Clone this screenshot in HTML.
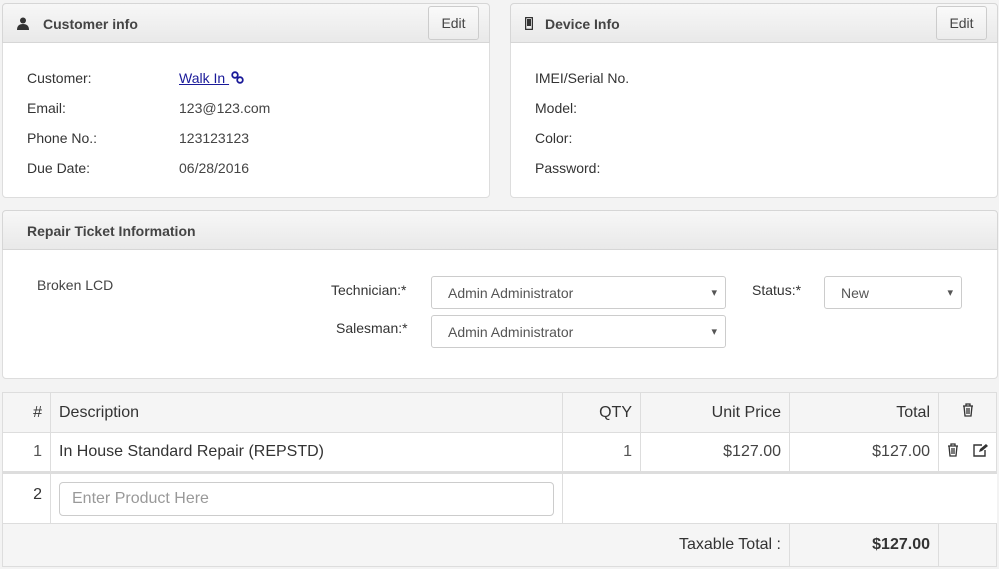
<!DOCTYPE html>
<html><head><meta charset="utf-8"><style>
*{box-sizing:border-box;margin:0;padding:0}
body{width:999px;height:569px;background:#f3f3f3;font-family:"Liberation Sans",sans-serif;font-size:14px;color:#333;position:relative;overflow:hidden}
.abs{position:absolute}
.panel{position:absolute;background:#fff;border:1px solid #ddd;border-radius:4px}
.hdr{position:absolute;background:linear-gradient(#f7f7f7,#e9e9e9);border:1px solid #d6d6d6;border-radius:4px 4px 0 0;font-weight:bold;color:#444;font-size:14px}
.btn{position:absolute;background:linear-gradient(#fafafa,#ececec);border:1px solid #ccc;border-radius:3px;font-size:14px;color:#444;text-align:center;line-height:32px}
.lbl{position:absolute;font-size:14px;color:#333}
.sel{position:absolute;background:#fff;border:1px solid #ccc;border-radius:3px;font-size:14px;color:#555;padding-left:16px;line-height:32px}
.sel:after{content:"▾";position:absolute;right:8px;top:0;font-size:11px;color:#555}
table{position:absolute;left:2px;top:392px;width:995px;border-collapse:collapse;font-size:16px}
td{border:1px solid #ddd;padding:0 8px}
</style></head><body>

<div class="panel" style="left:2px;top:38px;width:488px;height:160px"></div>
<div class="hdr" style="left:2px;top:3px;width:488px;height:40px">
<svg class="abs" style="left:14px;top:13px" width="12" height="13" viewBox="0 0 12 13"><circle cx="6" cy="3.5" r="3" fill="#333"/><path d="M0 13 Q0 7 6 7 Q12 7 12 13Z" fill="#333"/></svg>
<span class="abs" style="left:40px;top:12px">Customer info</span></div>
<div class="btn" style="left:428px;top:6px;width:51px;height:34px">Edit</div>
<div class="lbl" style="left:27px;top:70px">Customer:</div>
<div class="lbl" style="left:179px;top:70px;color:#1a1a99;text-decoration:underline">Walk In&nbsp;</div>
<svg class="abs" style="left:231px;top:71px" width="13" height="13" viewBox="0 0 13 13"><circle cx="4" cy="4" r="2.8" fill="none" stroke="#1a1a99" stroke-width="1.8"/><circle cx="9" cy="9" r="2.8" fill="none" stroke="#1a1a99" stroke-width="1.8"/></svg>
<div class="lbl" style="left:27px;top:100px">Email:</div>
<div class="lbl" style="left:179px;top:100px;color:#444">123@123.com</div>
<div class="lbl" style="left:27px;top:130px">Phone No.:</div>
<div class="lbl" style="left:179px;top:130px;color:#444">123123123</div>
<div class="lbl" style="left:27px;top:160px">Due Date:</div>
<div class="lbl" style="left:179px;top:160px;color:#444">06/28/2016</div>

<div class="panel" style="left:510px;top:38px;width:488px;height:160px"></div>
<div class="hdr" style="left:510px;top:3px;width:488px;height:40px">
<svg class="abs" style="left:14px;top:13px" width="8" height="13" viewBox="0 0 8 13"><rect x="0.5" y="0.5" width="7" height="12" rx="1" fill="none" stroke="#333" stroke-width="1.5"/><rect x="2" y="2" width="4" height="7" fill="#333"/></svg>
<span class="abs" style="left:34px;top:12px">Device Info</span></div>
<div class="btn" style="left:936px;top:6px;width:51px;height:34px">Edit</div>
<div class="lbl" style="left:535px;top:70px">IMEI/Serial No.</div>
<div class="lbl" style="left:535px;top:100px">Model:</div>
<div class="lbl" style="left:535px;top:130px">Color:</div>
<div class="lbl" style="left:535px;top:160px">Password:</div>

<div class="panel" style="left:2px;top:245px;width:996px;height:134px"></div>
<div class="hdr" style="left:2px;top:210px;width:996px;height:40px"><span class="abs" style="left:24px;top:12px">Repair Ticket Information</span></div>
<div class="lbl" style="left:37px;top:277px;color:#444">Broken LCD</div>
<div class="lbl" style="left:331px;top:282px">Technician:*</div>
<div class="sel" style="left:431px;top:276px;width:295px;height:33px">Admin Administrator</div>
<div class="lbl" style="left:752px;top:282px">Status:*</div>
<div class="sel" style="left:824px;top:276px;width:138px;height:33px">New</div>
<div class="lbl" style="left:336px;top:320px">Salesman:*</div>
<div class="sel" style="left:431px;top:315px;width:295px;height:33px">Admin Administrator</div>

<table>
<tr style="height:40px;background:#f5f5f5">
<td style="width:48px;text-align:right">#</td><td style="width:512px">Description</td><td style="width:78px;text-align:right">QTY</td><td style="width:149px;text-align:right">Unit Price</td><td style="width:149px;text-align:right">Total</td><td style="text-align:center"><svg width="12" height="14" viewBox="0 0 12 14"><path d="M1 3h10M4 3V1h4v2M2 3l1 10h6l1-10M5 5v6M7 5v6" fill="none" stroke="#333" stroke-width="1.3"/></svg></td></tr>
<tr style="height:40px;background:#fff;border-bottom:3px solid #ddd">
<td style="text-align:right;color:#555">1</td><td>In House Standard Repair (REPSTD)</td><td style="text-align:right;color:#555">1</td><td style="text-align:right;color:#444">$127.00</td><td style="text-align:right;color:#444">$127.00</td>
<td style="text-align:center"><svg width="12" height="14" viewBox="0 0 12 14"><path d="M1 3h10M4 3V1h4v2M2 3l1 10h6l1-10M5 5v6M7 5v6" fill="none" stroke="#333" stroke-width="1.3"/></svg>&nbsp;&nbsp;&nbsp;<svg width="15" height="14" viewBox="0 0 15 14"><path d="M9 2H1v11h11V7" fill="none" stroke="#333" stroke-width="1.4"/><path d="M6 9l1-3 6-5 2 2-6 5z" fill="#333"/></svg></td></tr>
<tr style="height:51px;background:#fff">
<td style="text-align:right;vertical-align:top;padding-top:12px;color:#333">2</td>
<td><div style="border:1px solid #ccc;border-radius:4px;height:34px;line-height:32px;padding-left:12px;color:#999">Enter Product Here</div></td>
<td colspan="4" style="border-right:none"></td></tr>
<tr style="height:43px;background:#f5f5f5">
<td colspan="4" style="text-align:right;border-right:1px solid #ddd">Taxable Total :</td><td style="text-align:right;font-weight:bold;color:#333">$127.00</td><td></td></tr>
</table>
</body></html>
